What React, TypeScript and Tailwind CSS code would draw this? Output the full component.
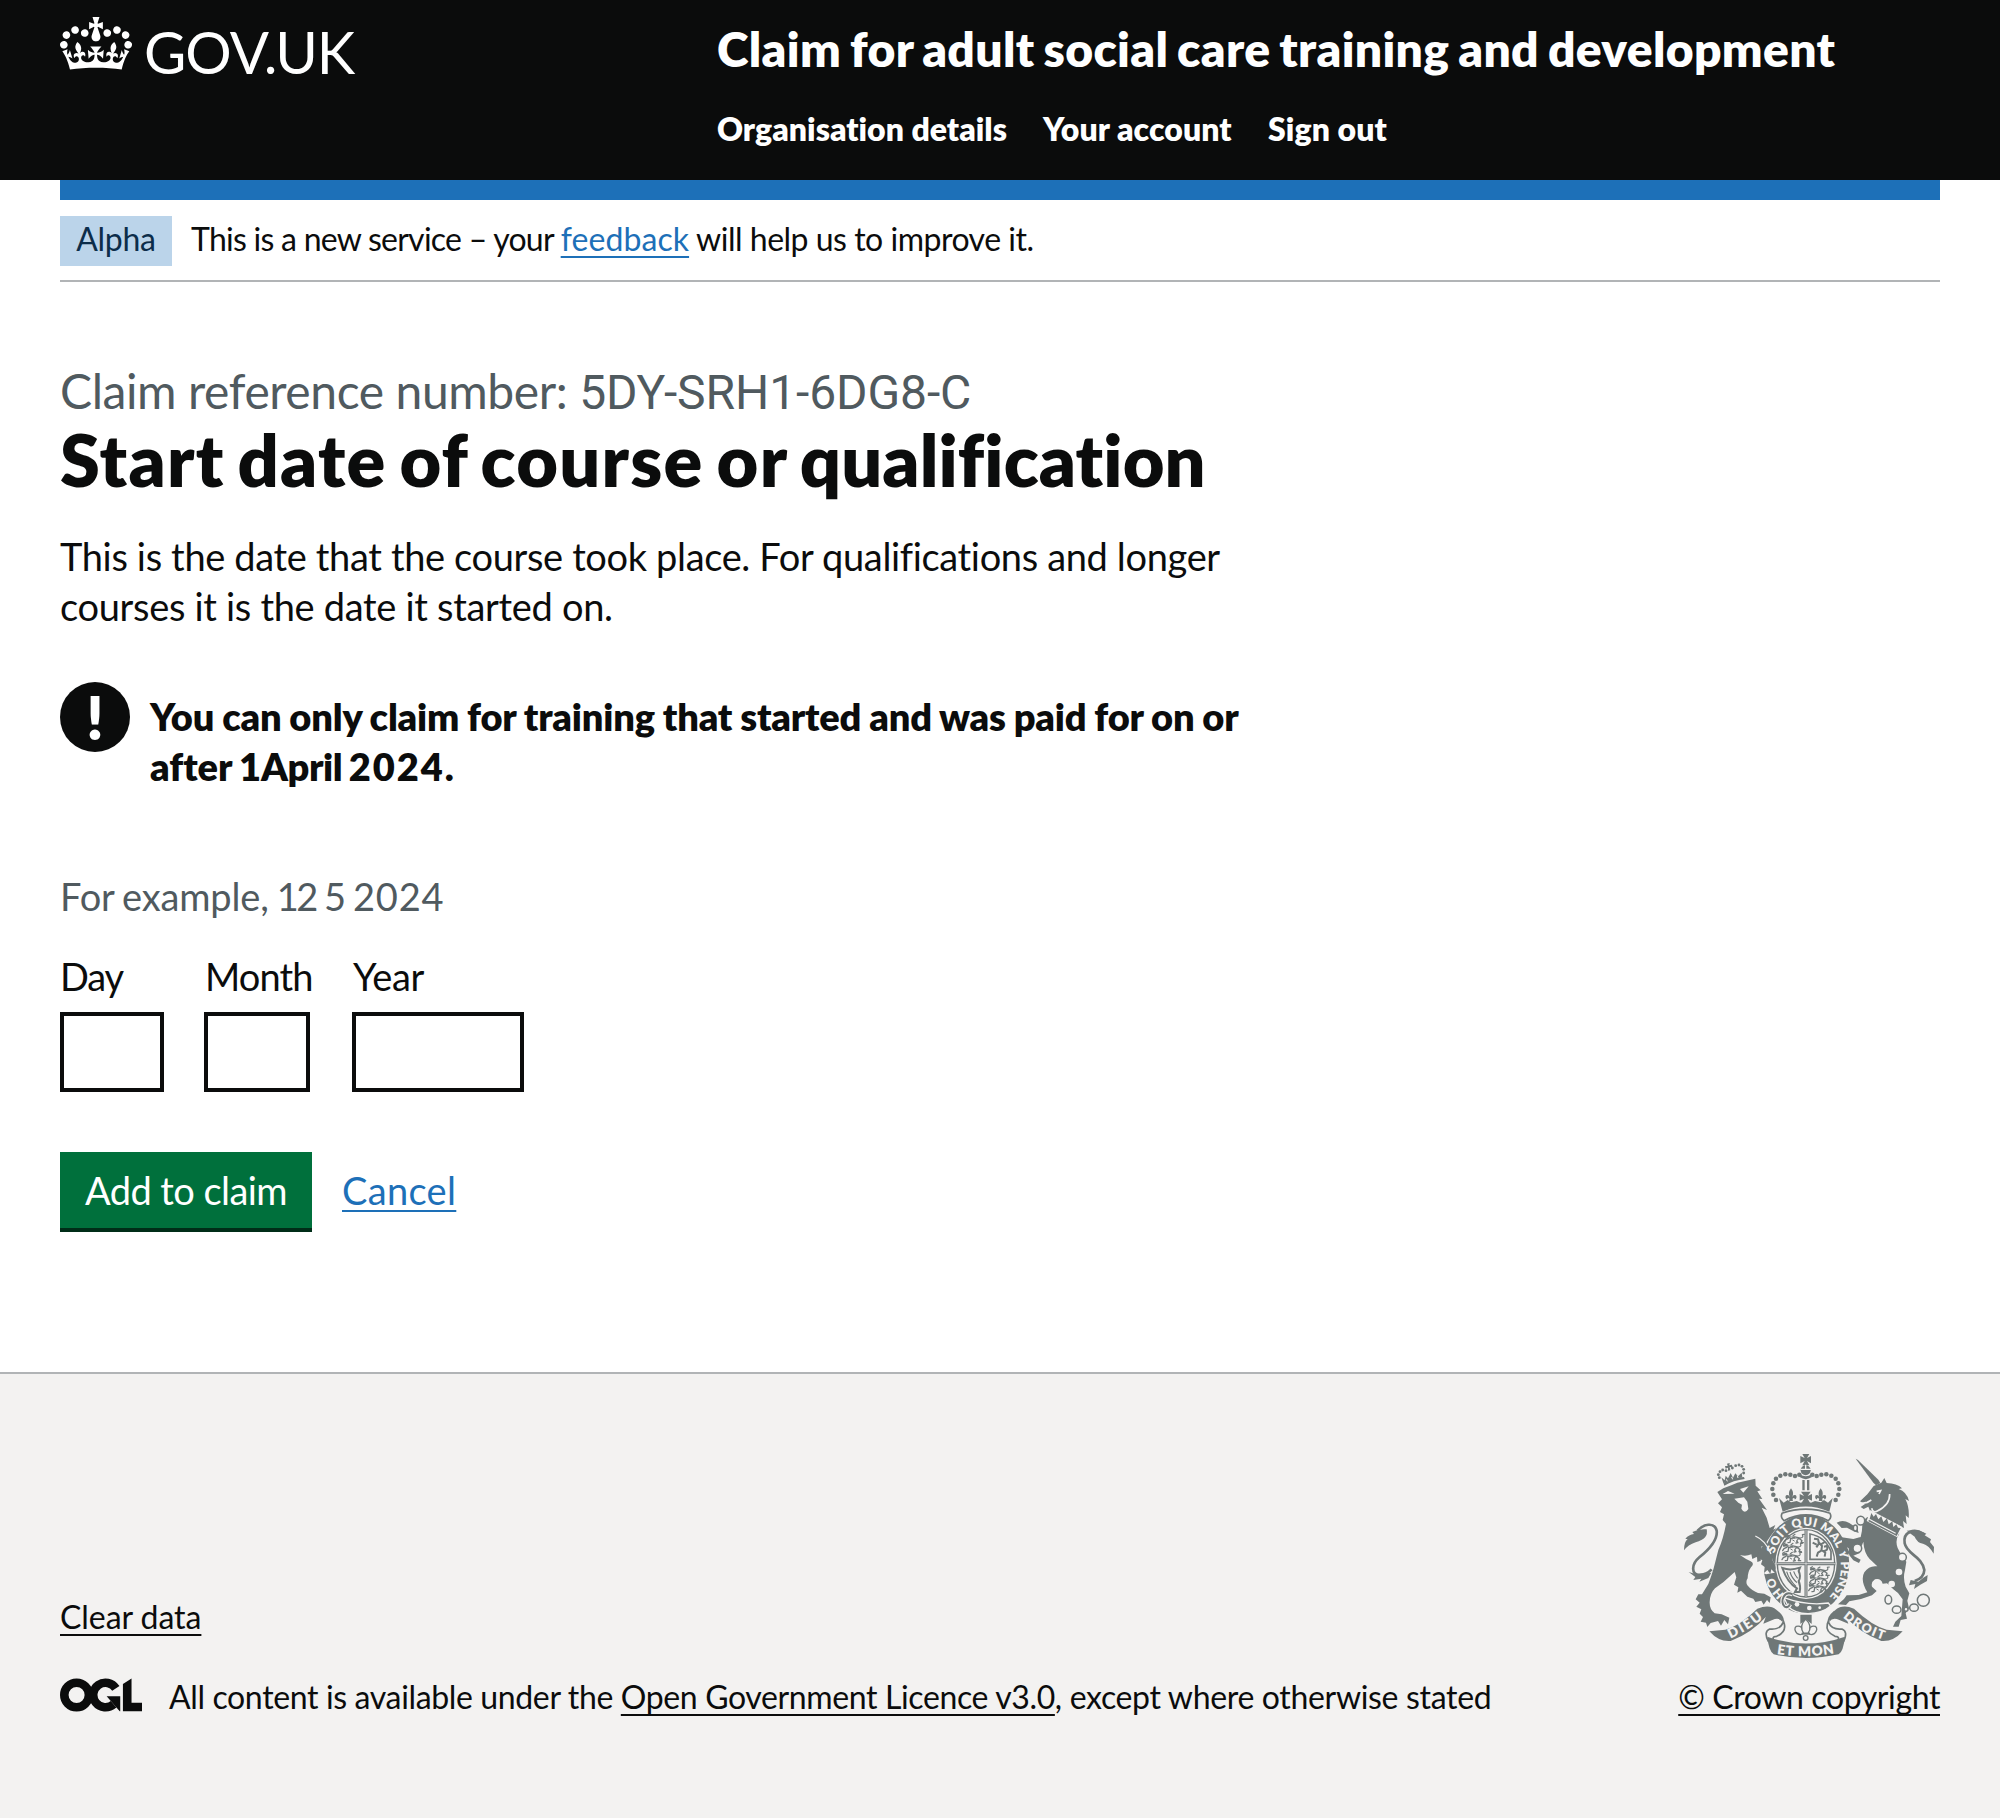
import type { ReactNode } from "react";

const INK = "#6f7777";
const PAPER = "#f3f2f1";

function Crown() {
  return (
    <svg viewBox="0 0 132 97" className="mt-[17px] h-[53px] w-[72px] shrink-0" fill="currentColor" aria-hidden="true">
      <path
        fillRule="evenodd"
        d="M25 30.2c3.5 1.5 7.7-.2 9.1-3.7 1.5-3.6-.2-7.8-3.9-9.2-3.6-1.4-7.6.3-9.1 3.9-1.4 3.5.3 7.5 3.9 9zM9 39.5c3.6 1.5 7.8-.2 9.2-3.7 1.5-3.6-.2-7.8-3.9-9.1-3.6-1.5-7.6.2-9.1 3.8-1.4 3.5.3 7.5 3.8 9zM4.4 57.2c3.5 1.5 7.7-.2 9.1-3.8 1.5-3.6-.2-7.7-3.9-9.1-3.5-1.5-7.6.3-9.1 3.8-1.4 3.5.3 7.6 3.9 9.1zm38.3-21.4c3.5 1.5 7.7-.2 9.1-3.8 1.5-3.6-.2-7.7-3.9-9.1-3.6-1.5-7.6.3-9.1 3.8-1.3 3.6.4 7.7 3.9 9.1zm64.4-5.6c-3.6 1.5-7.8-.2-9.1-3.7-1.5-3.6.2-7.8 3.8-9.2 3.6-1.4 7.7.3 9.2 3.9 1.3 3.5-.4 7.5-3.9 9zm15.9 9.3c-3.6 1.5-7.7-.2-9.1-3.7-1.5-3.6.2-7.8 3.7-9.1 3.6-1.5 7.7.2 9.2 3.8 1.5 3.5-.3 7.5-3.8 9zm4.7 17.7c-3.6 1.5-7.8-.2-9.2-3.8-1.5-3.6.2-7.7 3.9-9.1 3.6-1.5 7.7.3 9.2 3.8 1.3 3.5-.4 7.6-3.9 9.1zM89.3 35.8c-3.6 1.5-7.8-.2-9.2-3.8-1.4-3.6.2-7.7 3.9-9.1 3.6-1.5 7.7.3 9.2 3.8 1.4 3.6-.3 7.7-3.9 9.1zM69.7 17.7l8.9 4.7V9.3l-8.9 2.8c-.2-.3-.5-.6-.9-.9L72.4 0H59.6l3.5 11.2c-.3.3-.6.5-.9.9l-8.8-2.8v13.1l8.8-4.7c.3.3.6.7.9.9l-5 15.4v.1c-.2.8-.4 1.6-.4 2.4 0 4.1 3.1 7.5 7 8.1h.2c.3 0 .7.1 1 .1.4 0 .7 0 1-.1h.2c4-.6 7.1-4.1 7.1-8.1 0-.8-.1-1.7-.4-2.4V34l-5.1-15.4c.4-.2.7-.6 1-.9zM66 92.8c16.9 0 32.8 1.1 47.1 3.2 4-16.9 8.9-26.7 14-33.5l-9.6-3.4c1 4.9 1.1 7.2 0 10.2-1.5-1.4-3-4.3-4.2-8.7L108.6 76c2.8-2 5-3.2 7.5-3.3-4.4 9.4-10 11.9-13.6 11.2-4.3-.8-6.3-4.6-5.6-7.9 1-4.7 5.7-5.9 8-.5 4.3-8.7-3-11.4-7.6-8.8 7.1-7.2 7.9-13.5 2.1-21.1-8 6.1-8.1 12.3-4.5 20.8-4.7-5.4-12.1-2.5-9.5 6.2 3.4-5.2 7.9-2 7.2 3.1-.6 4.3-6.4 7.8-13.5 7.2-10.3-.9-10.9-8-11.2-13.8 2.5-.5 7.1 1.8 11 7.3L80.2 60c-4.1 4.4-8 5.3-12.3 5.4 1.4-4.4 8-11.6 8-11.6H55.5s6.4 7.2 7.9 11.6c-4.2-.1-8-1-12.3-5.4l1.4 16.4c3.9-5.5 8.5-7.7 10.9-7.3-.3 5.8-.9 12.8-11.1 13.8-7.2.6-12.9-2.9-13.5-7.2-.7-5 3.8-8.3 7.1-3.1 2.7-8.7-4.6-11.6-9.4-6.2 3.7-8.5 3.6-14.7-4.6-20.8-5.8 7.6-5 13.9 2.2 21.1-4.7-2.6-11.9.1-7.7 8.8 2.3-5.5 7.1-4.2 8.1.5.7 3.3-1.3 7.1-5.7 7.9-3.5.7-9-1.8-13.5-11.2 2.5.1 4.7 1.3 7.5 3.3l-4.7-15.4c-1.2 4.4-2.7 7.2-4.3 8.7-1.1-3-.9-5.3 0-10.2l-9.5 3.4c5 6.9 9.9 16.7 14 33.5 14.8-2.1 30.8-3.2 47.7-3.2z"
      />
    </svg>
  );
}

function LicenceLogo() {
  return (
    <svg viewBox="0 0 483.2 195.7" className="mt-px h-[34px] w-[82px] shrink-0" aria-hidden="true">
      <circle cx="97.8" cy="97.8" r="72.5" fill="none" stroke="#0b0c0c" strokeWidth="50.6" />
      <path d="M329.2 59A72.4 72.4 0 1 0 315.8 152.3" fill="none" stroke="#0b0c0c" strokeWidth="50.6" />
      <path d="M299.2 133.2L274.9 105.7H354.9V193.5H351.9L332.5 171.3Z" fill="#0b0c0c" />
      <path d="M421.5 142.8V.1L370.8 32.4V193.5H483.2V142.8Z" fill="#0b0c0c" />
    </svg>
  );
}

const CROWN_PEARLS: [number, number][] = [
  [348, 180], [340, 164], [337, 147], [340, 130], [348, 116], [361, 107], [376, 103], [391, 104], [405, 108], [418, 104],
];

const LION_CROWN_PEARLS: [number, number][] = [
  [178, 113], [175, 104], [180, 95], [188, 90], [198, 92], [217, 84], [227, 77], [237, 75], [246, 79], [251, 88], [251, 99],
];

function PassantLion({ x, y }: { x: number; y: number }) {
  return (
    <g transform={`translate(${x} ${y})`} fill="none" stroke={INK} strokeLinecap="round" strokeLinejoin="round">
      <path d="M4 5L12 3L18 9L30 7L44 10" strokeWidth="7" />
      <path d="M12 10L4 14L0 20M18 12L16 22L10 23M40 12L36 18L40 23L34 24M46 12L52 17L49 23L56 23" strokeWidth="4" />
      <path d="M47 9Q58 8 53 -1L59 -2M25 2L31 -2M2 1L8 -3" strokeWidth="3.5" />
      <path d="M24 15L29 18" strokeWidth="3" />
      <path d="M16 6L22 8M32 9L38 11" stroke={PAPER} strokeWidth="1.8" />
    </g>
  );
}

function Fleur({ x, y, s }: { x: number; y: number; s: number }) {
  return (
    <path
      transform={`translate(${x} ${y}) scale(${s})`}
      d="M0 -20Q9 -8 3 3Q6 -5 13 -2Q17 5 10 9Q9 3 4 7L5 13H-5L-4 7Q-9 3 -10 9Q-17 5 -13 -2Q-6 -5 -3 3Q-9 -8 0 -20Z"
      fill={INK}
    />
  );
}

function RoyalArms() {
  return (
    <svg viewBox="72 36 750 624" className="h-[208px] w-[250px]" aria-hidden="true">
      <defs>
        <path id="garter-top" d="M343 341A101 118 0 0 1 534 334" />
        <path id="garter-right" d="M535 334A99 118 0 0 1 494 482" />
        <path id="garter-left" d="M374 463A99 117 0 0 1 336 380" />
        <path id="motto-left" d="M211 596Q268 570 313 533" />
        <path id="motto-mid" d="M350 642Q437 656 526 640" />
        <path id="motto-right" d="M548 532Q604 580 674 600" />
      </defs>

      {/* lion */}
      <g fill={INK}>
        <path d="M172 156L190 145L214 136L232 128L286 116L287 137L302 151L292 154L307 177L297 176L321 210L305 203L320 233L329 264L346 255L340 269L350 264L330 290L318 308L333 332L337 360L349 381L344 398L334 388L331 401L322 390L312 399L314 381L303 373L307 361L292 366L291 350L277 357L274 343Q258 350 240 345Q258 358 272 364Q285 370 273 382Q263 396 263 415Q256 425 262 436Q275 452 294 459L313 461L332 472L329 489L321 480L311 494L304 482L286 486L280 476L262 470L243 452L232 458L235 442L222 434L229 412L224 396L214 405Q194 425 165 445Q150 460 149 486Q148 508 164 520L185 523L208 533L204 553L193 540L183 557L174 543L152 549L142 561L138 548L122 545L129 531L119 521L124 508L109 500L119 488L107 478L115 463L126 463L145 432Q155 406 161 385L175 330Q190 296 198 252L188 240L192 223L180 216L186 202L174 190L186 178Z" />
        <path d="M140 268Q147 296 107 307Q84 315 72 331Q72 305 83 298L76 296Q87 284 102 282L97 276Q115 266 140 268Z" />
        <path d="M86 396L106 402L154 398L145 414L118 425L124 416L100 420L106 411Z" />
      </g>
      <path d="M113 272C129 253 163 244 170 272C174 300 150 326 118 352C92 374 95 404 117 405Q140 404 155 388" fill="none" stroke={INK} strokeWidth="8" />
      <path d="M188 162L204 153L224 161M240 147L266 139L250 158" fill={PAPER} />
      <path d="M223 176L252 172L262 185L265 207Q254 224 244 206L246 194L235 188Z" fill={PAPER} />
      <g fill={INK}>
        <path d="M190 128Q222 112 252 111L254 117Q220 121 193 137Z" />
        {LION_CROWN_PEARLS.map(([x, y]) => (
          <circle key={`${x}-${y}`} cx={x} cy={y} r="4.3" />
        ))}
        <path d="M201 71L209 69L208 76L216 74L217 82L209 81L211 91L204 92L204 83L197 86L195 78L203 78Z" />
        <path d="M184 112L194 121L197 107L204 115L212 99L219 113L226 100L234 109L245 98L247 112L190 129Z" />
      </g>
      <path d="M199 118L202 124M215 111L218 118M232 107L234 114" stroke={PAPER} strokeWidth="3" />

      {/* garter and shield */}
      <ellipse cx="439" cy="373" rx="129" ry="148" fill={INK} />
      <path d="M305 318L333 332L337 360L349 381L344 398L318 403L300 395Z" fill={PAPER} />
      <path d="M312 312L286 285Q321 296 336 334L337 360L349 381L344 398L334 388L331 401L322 390L312 399L314 381L303 373L307 361L288 350Z" fill={INK} />
      <path d="M286 288Q318 302 333 342" fill="none" stroke={PAPER} strokeWidth="4" />
      <ellipse cx="438" cy="370" rx="92" ry="107" fill={PAPER} />
      <ellipse cx="438" cy="370" rx="86" ry="101" fill="none" stroke={INK} strokeWidth="4" />
      <path d="M438 269V471M350 371H526" stroke={INK} strokeWidth="9" />
      <path d="M438 269V471M350 371H526" stroke={PAPER} strokeWidth="2" />
      <PassantLion x={374} y={285} />
      <PassantLion x={368} y={312} />
      <PassantLion x={366} y={339} />
      <PassantLion x={449} y={383} />
      <PassantLion x={449} y={408} />
      <PassantLion x={446} y={432} />
      <path d="M450 282Q495 290 513 334V358H450Z" fill="none" stroke={INK} strokeWidth="5" />
      <path
        d="M462 296L474 298L477 310L469 322M474 304L486 318L484 332L474 338L470 350M484 330L496 338L494 350M482 314L494 306M470 314L458 308M488 334Q508 332 500 318L492 320"
        fill="none"
        stroke={INK}
        strokeWidth="6"
        strokeLinejoin="round"
      />
      <path d="M367 384Q391 393 420 383L416 393Q424 410 416 423Q423 440 419 456L405 456L411 445Q383 430 367 384Z" fill="none" stroke={INK} strokeWidth="6" />
      <path d="M380 395Q388 421 408 439M390 396Q395 414 411 428M401 394Q405 406 413 415" fill="none" stroke={INK} strokeWidth="3.5" />

      <g fill={PAPER} className="font-['Lato'] text-[36px] font-extrabold">
        <text textLength="258">
          <textPath href="#garter-top">SOIT QUI MAL</textPath>
        </text>
        <text textLength="146">
          <textPath href="#garter-right">Y PENSE</textPath>
        </text>
        <text textLength="62">
          <textPath href="#garter-left">HO</textPath>
        </text>
      </g>

      {/* belt and pendant */}
      <path d="M372 473Q440 498 505 489L512 498Q488 519 444 521Q404 520 385 500Z" fill={INK} stroke={PAPER} strokeWidth="4" />
      <path d="M398 463Q380 454 371 470Q362 488 374 500Q384 505 390 493" fill="none" stroke={PAPER} strokeWidth="13" />
      <path d="M398 463Q380 454 371 470Q362 488 374 500Q384 505 390 493" fill="none" stroke={INK} strokeWidth="6" />
      <circle cx="411" cy="493" r="7" fill={PAPER} />
      <circle cx="448" cy="504" r="7" fill={PAPER} />
      <circle cx="479" cy="503" r="4" fill={PAPER} />
      <path d="M421 524H455V552L438 538L421 552Z" fill={INK} />
      <g fill={PAPER} stroke={INK} strokeWidth="4">
        <path d="M432 577Q424 588 412 581Q399 568 409 559Q424 555 430 572M443 577Q451 588 463 581Q476 568 466 559Q451 555 445 572" />
        <path d="M437 537Q459 558 444 580H431Q416 558 437 537Z" />
        <circle cx="437" cy="594" r="7" />
        <path d="M425 581H450" strokeWidth="6" />
      </g>

      {/* imperial crown */}
      <g fill={INK}>
        <path d="M427 42H448L441 54L453 48V70L441 63L448 76H427L434 63L421 70V48L434 54Z" />
        <circle cx="437" cy="91" r="15" />
        {CROWN_PEARLS.map(([x, y]) => (
          <g key={`${x}-${y}`}>
            <circle cx={x} cy={y} r="6.8" />
            <circle cx={875 - x} cy={y} r="6.8" />
          </g>
        ))}
        <path d="M419 101Q437 116 456 101L455 112Q437 123 420 112Z" />
        <path d="M427 120H434V151H427ZM441 120H448V151H441Z" />
        <path d="M357 174L371 188L383 180L393 187L410 183L422 188L437 183L453 188L465 183L482 187L492 180L504 188L518 174L508 215Q437 184 368 215Z" />
        <path d="M423 155H452L443 168L456 162V182L443 176L450 188H425L432 176L419 182V162L432 168Z" />
      </g>
      <Fleur x={393} y={168} s={1.15} />
      <Fleur x={482} y={168} s={1.15} />
      <path d="M422 88H453M437 74V89" stroke={PAPER} strokeWidth="4" />
      <path d="M366 220Q437 195 510 220Q517 232 505 242Q437 207 372 242Q360 232 366 220Z" fill={PAPER} stroke={INK} strokeWidth="5" />

      {/* unicorn */}
      <g fill={INK}>
        <path d="M587 56L594 60L655 119L661 129L648 136L640 128Z" />
        <path d="M641 138L664 128L673 114L680 129Q711 130 726 145L716 147Q740 155 747 183L736 177Q749 203 746 234L737 226L740 252L729 243L732 264L630 213L625 200L611 207L602 201L615 192L600 184L622 163Z" />
        <path d="M622 231L718 281Q704 300 713 324Q722 345 739 365L735 390Q728 415 737 440L748 460L742 482L747 505L737 520L741 536L722 540L716 560L699 560L706 545L724 528L728 478L714 459L700 448L681 430L668 431Q663 414 645 418Q632 427 636 440L650 453L636 466L603 477L568 484L558 495L534 493L552 477L560 466L596 465L622 457Q600 420 613 397Q628 375 652 379L629 357Q612 338 610 305L602 326L600 339L580 347L602 359L597 369L580 361L568 346L566 325L548 315L544 293L560 306L590 296L602 291Q608 268 607 244Z" />
        <path d="M530 248Q548 238 568 249L592 265L596 279L581 274L561 263L545 264Z" />
        <path d="M545 292L580 297L599 292L598 306L567 308L561 322L572 345L557 337L548 318Z" />
        <path d="M740 272Q777 267 799 281L794 286L813 298L810 306L822 321L821 341Q806 315 789 311Q771 308 764 290Z" />
        <path d="M752 420L775 425L790 413L803 405L801 423L781 434L762 447L766 432L747 436Z" />
      </g>
      <path d="M790 282C763 263 728 275 734 310C740 343 786 348 793 390Q792 414 764 423" fill="none" stroke={INK} strokeWidth="8" />
      <path d="M650 154L662 152L657 162M606 190L622 187L634 180M689 162Q690 195 652 213Q639 220 635 205" fill="none" stroke={PAPER} strokeWidth="5" />
      <path d="M631 210L726 260L712 292L620 243Z" fill={PAPER} />
      <path d="M628 240L634 219L641 230L648 222L655 238L664 229L670 246L681 235L686 253L697 244L700 261L709 253L714 263L722 264L710 288L624 243Z" fill={INK} />
      <path d="M628 238L707 280" stroke={PAPER} strokeWidth="3.5" />
      <g fill={PAPER} stroke={INK} strokeWidth="4.5">
        <ellipse cx="602" cy="242" rx="12" ry="13" />
        <ellipse cx="586" cy="264" rx="6" ry="9" />
        <circle cx="592" cy="325" r="13" />
        <circle cx="727" cy="352" r="12" />
        <circle cx="717" cy="396" r="10" stroke="none" />
        <circle cx="695" cy="432" r="10" stroke="none" />
        <ellipse cx="685" cy="479" rx="10" ry="13" />
        <ellipse cx="710" cy="509" rx="13" ry="11" />
        <ellipse cx="762" cy="503" rx="13" ry="11" />
        <circle cx="790" cy="481" r="18" />
        <circle cx="738" cy="508" r="6" />
      </g>

      {/* motto ribbon */}
      <g fill={PAPER} stroke={INK} strokeWidth="5">
        <path d="M351 514Q373 532 369 548Q360 570 329 567Q310 575 325 604L344 607Q332 589 350 589Q379 576 373 552Q368 532 351 514Z" />
        <path d="M524 514Q502 532 506 548Q515 570 546 567Q565 575 551 604L531 607Q543 589 525 589Q496 576 502 552Q507 532 524 514Z" />
      </g>
      <g fill={INK}>
        <path d="M148 574L196 569Q240 557 292 506Q328 492 349 509Q366 523 367 545Q357 531 337 540L310 551Q316 533 318 530Q276 578 212 603Q176 606 148 574Z" />
        <path d="M728 574L680 569Q636 557 582 506Q548 492 527 509Q510 523 508 545Q518 531 538 540L565 551Q560 536 556 530Q600 578 664 603Q700 606 728 574Z" />
        <path d="M322 590Q437 631 555 590Q550 635 536 643Q437 665 341 643Q326 632 322 590Z" />
      </g>
      <g fill={PAPER} className="font-['Lato'] text-[41px] font-extrabold">
        <text textLength="116">
          <textPath href="#motto-left">DIEU</textPath>
        </text>
        <text textLength="174">
          <textPath href="#motto-mid">ET MON</textPath>
        </text>
        <text textLength="140" className="text-[38px]">
          <textPath href="#motto-right">DROIT</textPath>
        </text>
      </g>
    </svg>
  );
}

function Link({ className, children }: { className: string; children: ReactNode }) {
  return (
    <a
      href="#"
      className={`underline decoration-2 underline-offset-[5px] [text-decoration-skip-ink:none] ${className}`}
    >
      {children}
    </a>
  );
}

function DateField({ label, labelClass, inputClass }: { label: string; labelClass: string; inputClass: string }) {
  return (
    <label className="flex flex-col gap-[11px]">
      <span className={`leading-[50px] ${labelClass}`}>{label}</span>
      <input type="text" inputMode="numeric" className={`h-20 border-4 border-[#0b0c0c] bg-white ${inputClass}`} />
    </label>
  );
}

export default function App() {
  return (
    <div className="flex h-[1818px] w-[2000px] flex-col overflow-hidden bg-white font-['Lato',sans-serif] text-[38px] leading-[50px] whitespace-nowrap text-[#0b0c0c] [font-variant-ligatures:none]">
      <header className="flex h-[180px] shrink-0 bg-[#0b0c0c] px-[60px] text-white">
        <a href="#" className="flex w-[657px] items-start gap-3">
          <Crown />
          <span className="pt-[22px] text-[58px] leading-[60px] tracking-[-1px]">GOV.UK</span>
        </a>
        <div className="flex flex-col gap-[30px] pt-[19px] font-extrabold">
          <a href="#" className="text-[48px] leading-[60px] tracking-[0.33px] [word-spacing:-2.5px]">
            Claim for adult social care training and development
          </a>
          <nav className="flex text-[32px] leading-10">
            <a href="#" className="w-[326px] tracking-[0.02px]">Organisation details</a>
            <a href="#" className="w-[225px] tracking-[0.08px]">Your account</a>
            <a href="#" className="tracking-[0.1px]">Sign out</a>
          </nav>
        </div>
      </header>

      <div className="mx-[60px] shrink-0 border-b-2 border-[#b1b4b6]">
        <div className="h-5 bg-[#1d70b8]" />
        <div className="flex gap-[19px] pt-4 pb-[14px] text-[32px] leading-[45px]">
          <strong className="h-[50px] w-28 bg-[#bbd4ea] text-center font-normal tracking-[-0.3px] text-[#0c2d4a]">Alpha</strong>
          <p className="flex h-[50px] whitespace-pre">
            <span className="tracking-[-0.74px]">This is a new service – your </span>
            <Link className="text-[#1d70b8] tracking-[0.08px]">feedback</Link>
            <span className="tracking-[-0.49px]"> will help us to improve it.</span>
          </p>
        </div>
      </div>

      <main className="shrink-0 px-[60px] pt-[79px]">
        <p className="flex h-[60px] items-baseline text-[48px] leading-[60px] whitespace-pre text-[#505a5f]">
          <span className="tracking-[-0.42px]">Claim reference number: </span>
          <span className="font-['Roboto'] tracking-[-0.1px]">5DY-SRH1-6DG8-C</span>
        </p>
        <h1 className="text-[72px] leading-[76px] font-extrabold">
          <span className="tracking-[1.25px] [word-spacing:-5px]">Start date of course or </span>
          <span className="tracking-[0.1px]">qualification</span>
        </h1>
        <p className="mt-[34px]">
          <span className="tracking-[-0.35px]">This is the date that the course took place. For qualifications and longer</span>
          <br />
          <span className="tracking-[-0.31px]">courses it is the date it started on.</span>
        </p>

        <div className="mt-[51px] flex gap-5">
          <span className="flex size-[70px] items-center justify-center rounded-full bg-[#0b0c0c] text-[60px] leading-[70px] font-extrabold text-white">
            !
          </span>
          <strong className="flex flex-col pt-[9px] font-extrabold">
            <span className="tracking-[-0.18px] [word-spacing:-0.7px]">
              You can only claim for training that started and was paid for on or
            </span>
            <span className="flex whitespace-pre">
              <span className="[word-spacing:-1.5px]">after </span>
              <span className="tracking-[-3px] [word-spacing:-3px]">1 </span>
              <span className="tracking-[-0.4px] [word-spacing:-2px]">April </span>
              <span className="tracking-[2px]">2024.</span>
            </span>
          </strong>
        </div>

        <p className="mt-20 flex whitespace-pre text-[#505a5f]">
          <span className="tracking-[-0.15px] [word-spacing:-1.5px]">For example, </span>
          <span className="tracking-[-2.6px]">12</span>
          <span className="tracking-[-1.4px]"> 5 </span>
          <span className="tracking-[0.8px]">2024</span>
        </p>
        <div className="mt-[30px] flex">
          <div className="w-36">
            <DateField label="Day" labelClass="tracking-[-1.2px]" inputClass="w-[104px]" />
          </div>
          <div className="w-[148px]">
            <DateField label="Month" labelClass="pl-px tracking-[-0.9px]" inputClass="w-[106px]" />
          </div>
          <DateField label="Year" labelClass="pl-px tracking-[-0.3px]" inputClass="w-[172px]" />
        </div>

        <div className="mt-[60px] flex h-20 gap-[30px] leading-[76px]">
          <button type="button" className="h-20 w-[252px] border-b-4 border-[#002d18] bg-[#00703c] tracking-[-0.55px] text-white">
            Add to claim
          </button>
          <Link className="tracking-[0.33px] text-[#1d70b8]">Cancel</Link>
        </div>
      </main>

      <footer className="mt-[140px] flex flex-1 items-end justify-between border-t-2 border-[#b1b4b6] bg-[#f3f2f1] px-[60px] pb-[101px] text-[32px] leading-10">
        <div className="flex flex-col items-start gap-10">
          <Link className="tracking-[-0.05px]">Clear data</Link>
          <div className="flex gap-[27px]">
            <LicenceLogo />
            <p className="flex whitespace-pre">
              <span className="tracking-[-0.36px]">All content is available under the </span>
              <Link className="tracking-[-0.37px]">Open Government Licence v3.0</Link>
              <span className="tracking-[-0.33px]">, except where otherwise stated</span>
            </p>
          </div>
        </div>
        <div className="flex flex-col items-center gap-[17px]">
          <RoyalArms />
          <Link className="tracking-[-0.39px]">© Crown copyright</Link>
        </div>
      </footer>
    </div>
  );
}
